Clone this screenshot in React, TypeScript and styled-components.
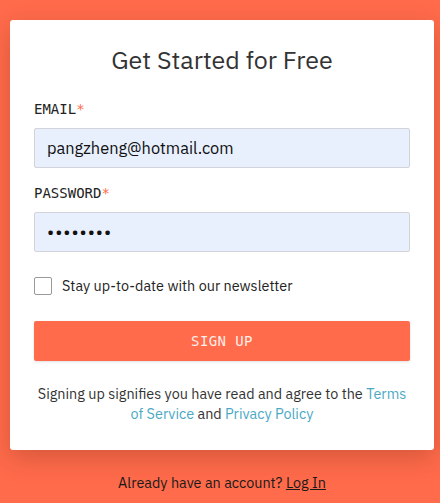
import styled, { createGlobalStyle } from "styled-components";

const GlobalStyle = createGlobalStyle`
  html, body {
    margin: 0;
    padding: 0;
    background-color: #ff6b4b;
    font-family: "IBM Plex Sans", "Noto Sans", "Liberation Sans", sans-serif;
  }
`;

const Page = styled.div`
  min-height: 503px;
  padding: 20px 6px 0 10px;
  box-sizing: border-box;
`;

const Card = styled.div`
  background: #fff;
  border-radius: 3px;
  box-shadow: 0 8px 24px rgba(90, 30, 10, 0.25);
  padding: 24px 24px 26px;
  box-sizing: border-box;
`;

const Title = styled.h1`
  margin: 0 0 25px;
  text-align: center;
  font-size: 25px;
  font-weight: 400;
  color: #333;
  line-height: 32px;
`;

const Field = styled.div`
  display: flex;
  flex-direction: column;
  margin-bottom: 17px;
`;

const Label = styled.label`
  font-family: "DejaVu Sans Mono", "Liberation Mono", monospace;
  font-size: 14px;
  color: #222;
  line-height: 16px;
  margin-bottom: 11px;

  span {
    color: #ff6b4b;
  }
`;

const Input = styled.input<{ $dots?: boolean }>`
  height: 40px;
  box-sizing: border-box;
  border: 1px solid #d2d4d9;
  border-radius: 2px;
  background: #e8f0fe;
  padding: 0 12px;
  font-family: inherit;
  font-size: ${(p) => (p.$dots ? "18px" : "16.4px")};
  letter-spacing: ${(p) => (p.$dots ? "1px" : "0")};
  color: #111;
  outline: none;
`;

const CheckRow = styled.label`
  display: flex;
  align-items: center;
  gap: 10px;
  margin: 24px 0 26px;
  font-size: 14.4px;
  color: #222;
`;

const Box = styled.span`
  width: 16px;
  height: 16px;
  border: 1px solid #999;
  border-radius: 2px;
  background: #fff;
`;

const Button = styled.button`
  width: 100%;
  height: 40px;
  border: none;
  border-radius: 2px;
  background: #ff6b4b;
  color: #ffeee8;
  font-family: "DejaVu Sans Mono", "Liberation Mono", monospace;
  font-size: 14px;
  letter-spacing: 0.4px;
  box-shadow: 0 1px 3px rgba(0, 0, 0, 0.12);
  cursor: pointer;
`;

const Legal = styled.p`
  margin: 23px 0 0;
  text-align: center;
  font-size: 14.4px;
  line-height: 20px;
  color: #333;

  a {
    color: #4ba9c4;
    text-decoration: none;
  }
`;

const Footer = styled.p`
  margin: 23px 0 0;
  text-align: center;
  font-size: 14.4px;
  color: #1a1a1a;

  a {
    color: #1a1a1a;
    text-decoration: underline;
  }
`;

function App() {
  return (
    <>
      <GlobalStyle />
      <Page>
        <Card>
          <Title>Get Started for Free</Title>
          <Field>
            <Label>
              EMAIL<span>*</span>
            </Label>
            <Input defaultValue="pangzheng@hotmail.com" />
          </Field>
          <Field>
            <Label>
              PASSWORD<span>*</span>
            </Label>
            <Input $dots type="password" defaultValue="password" />
          </Field>
          <CheckRow>
            <Box />
            Stay up-to-date with our newsletter
          </CheckRow>
          <Button>SIGN UP</Button>
          <Legal>
            Signing up signifies you have read and agree to the{" "}
            <a href="#">Terms of Service</a> and <a href="#">Privacy Policy</a>
          </Legal>
        </Card>
        <Footer>
          Already have an account? <a href="#">Log In</a>
        </Footer>
      </Page>
    </>
  );
}

export default App;
